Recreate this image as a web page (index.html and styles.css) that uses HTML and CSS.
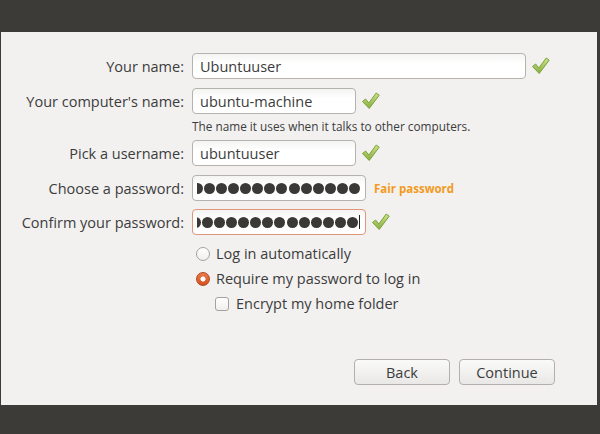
FILE: index.html
```html
<!DOCTYPE html>
<html>
<head>
<meta charset="utf-8">
<link rel="stylesheet" href="styles.css">
</head>
<body>
<div class="window">
  <div class="topbar"></div>
  <main class="content">
    <div class="form">
      <div class="row">
        <span class="lbl">Your name:</span>
        <div class="field w-wide">Ubuntuuser</div>
        <svg class="check" viewBox="0 0 20 20"><defs><linearGradient id="g1" x1="0" y1="0" x2="0" y2="1"><stop offset="0" stop-color="#cde38a"/><stop offset="1" stop-color="#86ad3e"/></linearGradient></defs><path d="M1.5 10.5 L4.6 8 L7.8 12 L15.2 2 L18.2 4.2 L8.2 17.5 Z" fill="url(#g1)" stroke="#7ba23a" stroke-width="1" stroke-linejoin="round"/></svg>
      </div>
      <div class="row row-gap">
        <span class="lbl">Your computer's name:</span>
        <div class="field w-mid">ubuntu-machine</div>
        <svg class="check" viewBox="0 0 20 20"><path d="M1.5 10.5 L4.6 8 L7.8 12 L15.2 2 L18.2 4.2 L8.2 17.5 Z" fill="url(#g1)" stroke="#7ba23a" stroke-width="1" stroke-linejoin="round"/></svg>
      </div>
      <div class="hint">The name it uses when it talks to other computers.</div>
      <div class="row">
        <span class="lbl">Pick a username:</span>
        <div class="field w-mid">ubuntuuser</div>
        <svg class="check" viewBox="0 0 20 20"><path d="M1.5 10.5 L4.6 8 L7.8 12 L15.2 2 L18.2 4.2 L8.2 17.5 Z" fill="url(#g1)" stroke="#7ba23a" stroke-width="1" stroke-linejoin="round"/></svg>
      </div>
      <div class="row row-gap">
        <span class="lbl">Choose a password:</span>
        <div class="field w-pw"><span class="dots"><span class="d"></span><span class="d"></span><span class="d"></span><span class="d"></span><span class="d"></span><span class="d"></span><span class="d"></span><span class="d"></span><span class="d"></span><span class="d"></span><span class="d"></span><span class="d"></span><span class="d"></span><span class="d"></span><span class="d"></span></span></div>
        <span class="strength">Fair password</span>
      </div>
      <div class="row row-gap2">
        <span class="lbl">Confirm your password:</span>
        <div class="field w-pw focus"><span class="dots"><span class="d"></span><span class="d"></span><span class="d"></span><span class="d"></span><span class="d"></span><span class="d"></span><span class="d"></span><span class="d"></span><span class="d"></span><span class="d"></span><span class="d"></span><span class="d"></span><span class="d"></span><span class="d"></span><span class="d"></span><span class="caret"></span></span></div>
        <svg class="check" viewBox="0 0 20 20"><path d="M1.5 10.5 L4.6 8 L7.8 12 L15.2 2 L18.2 4.2 L8.2 17.5 Z" fill="url(#g1)" stroke="#7ba23a" stroke-width="1" stroke-linejoin="round"/></svg>
      </div>
      <div class="options">
        <div class="opt"><span class="radio"></span>Log in automatically</div>
        <div class="opt"><span class="radio on"></span>Require my password to log in</div>
        <div class="opt sub"><span class="checkbox"></span>Encrypt my home folder</div>
      </div>
    </div>
    <div class="buttons">
      <button class="btn">Back</button>
      <button class="btn">Continue</button>
    </div>
  </main>
  <div class="bottombar"></div>
</div>
</body>
</html>
```

FILE: styles.css
```css
html, body {
  margin: 0;
  padding: 0;
}
body {
  background: #3c3b37;
  font-family: "Open Sans", "Noto Sans", sans-serif;
  color: #3c3c3c;
  font-size: 14.5px;
}
.window {
  width: 600px;
  height: 434px;
  display: flex;
  flex-direction: column;
}
.topbar {
  height: 32px;
  background: #3c3b37;
}
.bottombar {
  height: 29px;
  background: #3c3b37;
}
.content {
  height: 373px;
  margin: 0 3px 0 1px;
  background: #f2f1f0;
  display: flex;
  flex-direction: column;
}
.form {
  padding-top: 21px;
}
.row {
  display: flex;
  align-items: center;
  height: 26px;
}
.row-gap { margin-top: 9px; }
.row-gap2 { margin-top: 8px; }
.lbl {
  text-align: right;
  padding-right: 8px;
  box-sizing: border-box;
  width: 191px;
  white-space: nowrap;
}
.field {
  box-sizing: border-box;
  height: 26px;
  border: 1px solid #b6b3ae;
  border-radius: 4px;
  background: linear-gradient(#f4f4f3, #ffffff 40%);
  padding: 0 7px;
  display: flex;
  align-items: center;
  white-space: nowrap;
  overflow: hidden;
}
.w-wide { width: 334px; }
.w-mid { width: 164px; }
.w-pw { width: 174px; padding: 0 5px 0 4px; }
.check {
  width: 20px;
  height: 20px;
  margin-left: 5px;
}
.hint {
  margin: 3px 0 5px 191px;
  line-height: 18px;
  font-size: 11.8px;
}
.dots {
  flex: 1;
  display: flex;
  align-items: center;
  justify-content: flex-end;
  overflow: hidden;
  height: 14px;
}
.d {
  flex: none;
  width: 11px;
  height: 11px;
  border-radius: 50%;
  background: #3a3935;
  margin-left: 1.1px;
}
.focus {
  border-color: #e0967a;
}
.caret {
  flex: none;
  width: 1px;
  height: 14px;
  background: #222;
  margin-left: 1px;
}
.strength {
  margin-left: 8px;
  color: #f39a1c;
  font-weight: bold;
  font-size: 11.5px;
}
.options {
  margin-top: 6px;
  padding-left: 195px;
}
.opt {
  height: 25px;
  display: flex;
  align-items: center;
}
.opt.sub {
  padding-left: 19px;
}
.radio {
  box-sizing: border-box;
  width: 14px;
  height: 14px;
  border-radius: 50%;
  border: 1px solid #a5a29d;
  background: linear-gradient(#ffffff, #f0efee);
  margin-right: 6px;
  flex: none;
}
.radio.on {
  border-color: #b5461d;
  background: radial-gradient(circle, #ffffff 0 2.3px, transparent 2.8px), linear-gradient(#ec7a4f, #d4511f);
}
.checkbox {
  box-sizing: border-box;
  width: 14px;
  height: 14px;
  border-radius: 3px;
  border: 1px solid #a5a29d;
  background: linear-gradient(#ffffff, #f0efee);
  margin-right: 7px;
  flex: none;
}
.buttons {
  margin-top: auto;
  padding: 0 42px 20px 0;
  display: flex;
  justify-content: flex-end;
  gap: 9px;
}
.btn {
  width: 96px;
  height: 26px;
  box-sizing: border-box;
  border: 1px solid #b3b0ab;
  border-radius: 4px;
  background: linear-gradient(#fafaf9, #e9e8e6);
  font-family: inherit;
  font-size: 14.5px;
  color: #3c3c3c;
  padding: 0;
}
```
